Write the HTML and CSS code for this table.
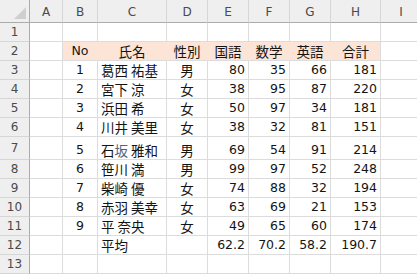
FILE: index.html
```html
<!DOCTYPE html>
<html lang="ja">
<head>
<meta charset="utf-8">
<link rel="stylesheet" href="styles.css">
</head>
<body>
<div class="sheet">
  <div class="ch corner"><span class="tri"></span></div>
  <div class="ch">A</div><div class="ch">B</div><div class="ch">C</div><div class="ch">D</div><div class="ch">E</div><div class="ch">F</div><div class="ch">G</div><div class="ch">H</div><div class="ch last">I</div>

  <div class="rh">1</div>
  <div class="c"></div><div class="c"></div><div class="c"></div><div class="c"></div><div class="c"></div><div class="c"></div><div class="c"></div><div class="c"></div><div class="c"></div>

  <div class="rh">2</div>
  <div class="c"></div>
  <div class="c hd num-c">No</div>
  <div class="c hd ja ctr">氏名</div>
  <div class="c hd ja ctr">性別</div>
  <div class="c hd ja ctr">国語</div>
  <div class="c hd ja ctr">数学</div>
  <div class="c hd ja ctr">英語</div>
  <div class="c hd hd-end ja ctr">合計</div>
  <div class="c"></div>

  <div class="rh">3</div>
  <div class="c"></div><div class="c num ctr">1</div><div class="c ja">葛西 祐基</div><div class="c ja ctr">男</div><div class="c num">80</div><div class="c num">35</div><div class="c num">66</div><div class="c num">181</div><div class="c"></div>

  <div class="rh">4</div>
  <div class="c"></div><div class="c num ctr">2</div><div class="c ja">宮下 涼</div><div class="c ja ctr">女</div><div class="c num">38</div><div class="c num">95</div><div class="c num">87</div><div class="c num">220</div><div class="c"></div>

  <div class="rh">5</div>
  <div class="c"></div><div class="c num ctr">3</div><div class="c ja">浜田 希</div><div class="c ja ctr">女</div><div class="c num">50</div><div class="c num">97</div><div class="c num">34</div><div class="c num">181</div><div class="c"></div>

  <div class="rh">6</div>
  <div class="c"></div><div class="c num ctr">4</div><div class="c ja">川井 美里</div><div class="c ja ctr">女</div><div class="c num">38</div><div class="c num">32</div><div class="c num">81</div><div class="c num">151</div><div class="c"></div>

  <div class="rh">7</div>
  <div class="c"></div><div class="c num ctr">5</div><div class="c ja"><span>石<span class="alt">坂</span> 雅和</span></div><div class="c ja ctr">男</div><div class="c num">69</div><div class="c num">54</div><div class="c num">91</div><div class="c num">214</div><div class="c"></div>

  <div class="rh">8</div>
  <div class="c"></div><div class="c num ctr">6</div><div class="c ja">笹川 満</div><div class="c ja ctr">男</div><div class="c num">99</div><div class="c num">97</div><div class="c num">52</div><div class="c num">248</div><div class="c"></div>

  <div class="rh">9</div>
  <div class="c"></div><div class="c num ctr">7</div><div class="c ja">柴崎 優</div><div class="c ja ctr">女</div><div class="c num">74</div><div class="c num">88</div><div class="c num">32</div><div class="c num">194</div><div class="c"></div>

  <div class="rh">10</div>
  <div class="c"></div><div class="c num ctr">8</div><div class="c ja">赤羽 美幸</div><div class="c ja ctr">女</div><div class="c num">63</div><div class="c num">69</div><div class="c num">21</div><div class="c num">153</div><div class="c"></div>

  <div class="rh">11</div>
  <div class="c"></div><div class="c num ctr">9</div><div class="c ja">平 奈央</div><div class="c ja ctr">女</div><div class="c num">49</div><div class="c num">65</div><div class="c num">60</div><div class="c num">174</div><div class="c"></div>

  <div class="rh">12</div>
  <div class="c"></div><div class="c"></div><div class="c ja">平均</div><div class="c"></div><div class="c num">62.2</div><div class="c num">70.2</div><div class="c num">58.2</div><div class="c num">190.7</div><div class="c"></div>

  <div class="rh">13</div>
  <div class="c"></div><div class="c"></div><div class="c"></div><div class="c"></div><div class="c"></div><div class="c"></div><div class="c"></div><div class="c"></div><div class="c"></div>
</div>
</body>
</html>
```

FILE: styles.css
```css
html, body {
  margin: 0;
  padding: 0;
  background: #ffffff;
  overflow: hidden;
}

.sheet {
  display: grid;
  grid-template-columns: 30px 33px 35px 69px 41px 41px 41px 41px 50px 40px;
  grid-template-rows: 23px 19px 19px 19px 19px 19px 19px 23px 19px 19px 19px 19px 19px 19px;
  width: 417px;
  font-family: "DejaVu Sans", "Noto Sans CJK JP", sans-serif;
  color: #141414;
}

.ch, .rh, .c {
  box-sizing: border-box;
  display: flex;
  align-items: flex-end;
  overflow: hidden;
  white-space: nowrap;
}

.ch {
  background: #efefef;
  border-right: 1px solid #d6d6d6;
  border-bottom: 1px solid #ababab;
  justify-content: center;
  align-items: center;
  font-size: 12px;
  color: #4a4a4a;
  padding-top: 1px;
}

.ch.last {
  border-right: none;
}

.corner {
  position: relative;
  border-right: 1px solid #ababab;
}

.tri {
  position: absolute;
  right: 3px;
  bottom: 3px;
  width: 0;
  height: 0;
  border-left: 12px solid transparent;
  border-bottom: 12px solid #cfcfcf;
}

.rh {
  background: #efefef;
  border-right: 1px solid #ababab;
  border-bottom: 1px solid #d6d6d6;
  justify-content: center;
  align-items: center;
  font-size: 12px;
  color: #4a4a4a;
}

.c {
  border-right: 1px solid #dcdcdc;
  border-bottom: 1px solid #dcdcdc;
  padding: 0 3px 2px 3px;
  font-size: 12.5px;
  line-height: 15px;
}

.num {
  justify-content: flex-end;
  font-family: "DejaVu Sans", sans-serif;
  font-size: 12.5px;
}

.num.ctr, .ctr {
  justify-content: center;
}

.num-c {
  justify-content: center;
  font-family: "DejaVu Sans", sans-serif;
  font-size: 12.5px;
}

.ja {
  font-family: "Noto Sans CJK JP", sans-serif;
  font-size: 13.5px;
  line-height: 16px;
  padding-bottom: 1px;
}

.hd {
  background: #fce4d6;
  border-right-color: #fce4d6;
}

.hd-end {
  border-right-color: #dcdcdc;
}

.alt {
  color: #55637a;
}
```
